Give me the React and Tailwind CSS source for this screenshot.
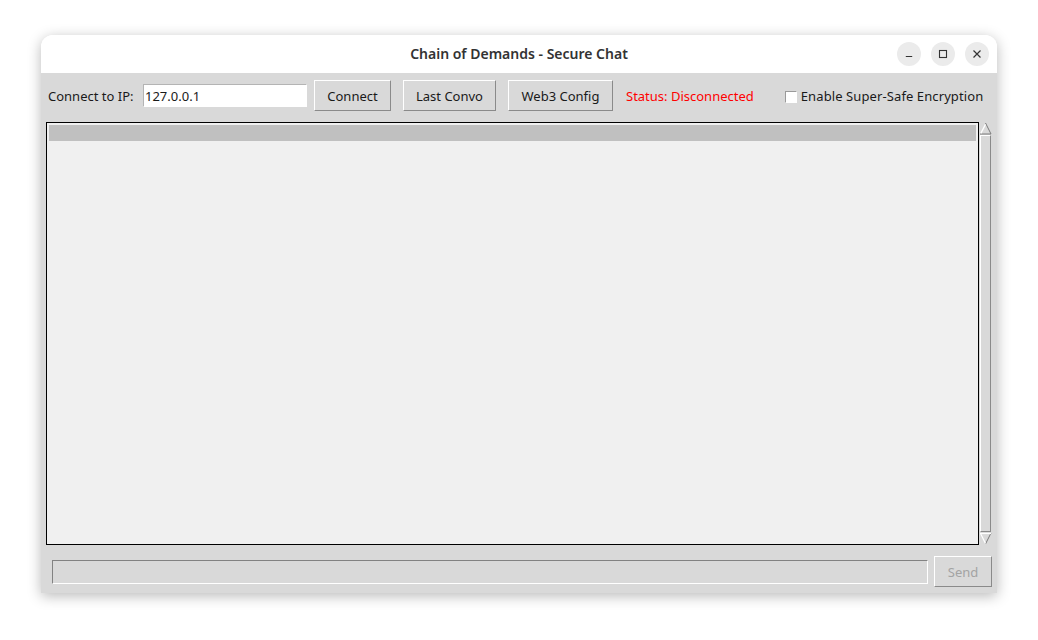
import React, { useState } from 'react';

const font = { fontFamily: '"Noto Sans", "Open Sans", sans-serif' };

const RaisedButton = ({ children, className = '', disabled = false }) => (
  <button
    disabled={disabled}
    className={`h-[31px] shrink-0 border border-t-white border-l-white border-r-[#8a8a8a] border-b-[#8a8a8a] bg-[#d9d9d9] pt-[1px] text-[13px] leading-none ${
      disabled ? 'text-[#a3a3a3]' : 'text-[#1a1a1a]'
    } ${className}`}
  >
    {children}
  </button>
);

const TitleButton = ({ children }) => (
  <div className="flex h-6 w-6 items-center justify-center rounded-full bg-[#ebebeb] text-[#333]">
    {children}
  </div>
);

const App = () => {
  const [ip, setIp] = useState('127.0.0.1');
  const [safe, setSafe] = useState(false);

  return (
    <div className="h-[640px] w-[1038px] overflow-hidden bg-white pl-[41px] pt-[35px]" style={font}>
      <div className="flex h-[558px] w-[956px] flex-col overflow-hidden rounded-t-[12px] shadow-[0_3px_14px_rgba(0,0,0,0.28)]">
        {/* title bar */}
        <div className="relative flex h-[38px] shrink-0 items-center justify-center bg-white pb-[2px]">
          <span className="text-[14px] font-semibold text-[#333]">Chain of Demands - Secure Chat</span>
          <div className="absolute right-[8px] top-[7px] flex gap-[10px]">
            <TitleButton>
              <svg width="10" height="10" viewBox="0 0 10 10">
                <path d="M1.8 7.5h6.4" stroke="currentColor" strokeWidth="1.1" />
              </svg>
            </TitleButton>
            <TitleButton>
              <svg width="10" height="10" viewBox="0 0 10 10">
                <rect x="1.5" y="1.5" width="7" height="7" fill="none" stroke="currentColor" strokeWidth="1.1" />
              </svg>
            </TitleButton>
            <TitleButton>
              <svg width="10" height="10" viewBox="0 0 10 10">
                <path d="M1.5 1.5l7 7M8.5 1.5l-7 7" stroke="currentColor" strokeWidth="1.2" />
              </svg>
            </TitleButton>
          </div>
        </div>

        {/* window body */}
        <div className="flex flex-1 flex-col bg-[#d9d9d9]">
          {/* toolbar */}
          <div className="mt-[7px] flex h-[31px] items-center pl-[7px] text-[13px] text-[#1a1a1a]">
            <span className="mt-[2px] w-[95px] shrink-0">Connect to IP:</span>
            <input
              value={ip}
              onChange={(e) => setIp(e.target.value)}
              className="h-[23px] w-[164px] shrink-0 border border-[#b4b4b4] border-r-white border-b-white bg-white px-[1px] pt-[1px] text-[13px] text-[#1a1a1a] outline-none"
            />
            <RaisedButton className="ml-[7px] w-[77px]">Connect</RaisedButton>
            <RaisedButton className="ml-[12px] w-[93px]">Last Convo</RaisedButton>
            <RaisedButton className="ml-[12px] w-[105px]">Web3 Config</RaisedButton>
            <span className="ml-[13px] mt-[2px] text-[#ff0000]">Status: Disconnected</span>
            <label className="ml-[31px] mt-[2px] flex items-center">
              <span
                onClick={() => setSafe(!safe)}
                className="h-[12px] w-[12px] border border-[#9a9a9a] border-r-white border-b-white bg-white"
              />
              <span className="ml-[4px] tracking-[0.1px]">Enable Super-Safe Encryption</span>
            </label>
          </div>

          {/* chat log + scrollbar */}
          <div className="mt-[11px] flex h-[423px] pl-[5px]">
            <div className="w-[933px] border border-black bg-[#f0f0f0] p-[2px]">
              <div className="h-[16px] bg-[#c0c0c0]" />
            </div>
            <div className="flex w-[13px] flex-col bg-[#d9d9d9]">
              <svg width="13" height="13" viewBox="0 0 13 13" className="shrink-0">
                <path d="M6.5 1L12 12H1Z" fill="#d9d9d9" />
                <path d="M6.5 1L12 12H1" fill="none" stroke="#7a7a7a" strokeWidth="1" />
                <path d="M6.5 2.4L1.8 11.4" stroke="#ffffff" strokeWidth="1.2" />
              </svg>
              <div className="mx-[1px] flex-1 border border-t-white border-l-white border-r-[#8a8a8a] border-b-[#8a8a8a]" />
              <svg width="13" height="13" viewBox="0 0 13 13" className="shrink-0">
                <path d="M1 1H12L6.5 12Z" fill="#d9d9d9" />
                <path d="M12 1L6.5 12" stroke="#7a7a7a" strokeWidth="1" />
                <path d="M1 1.5H12" stroke="#ffffff" strokeWidth="1.2" />
                <path d="M1.4 1.2L6.5 11.6" stroke="#ffffff" strokeWidth="1.2" />
              </svg>
            </div>
          </div>

          {/* message entry */}
          <div className="mt-[11px] flex items-center pl-[11px]">
            <input
              disabled
              className="h-[24px] w-[876px] border border-[#828282] border-r-white border-b-white bg-[#d9d9d9] outline-none"
            />
            <RaisedButton disabled className="ml-[6px] w-[58px]">
              Send
            </RaisedButton>
          </div>
        </div>
      </div>
    </div>
  );
};

export default App;
